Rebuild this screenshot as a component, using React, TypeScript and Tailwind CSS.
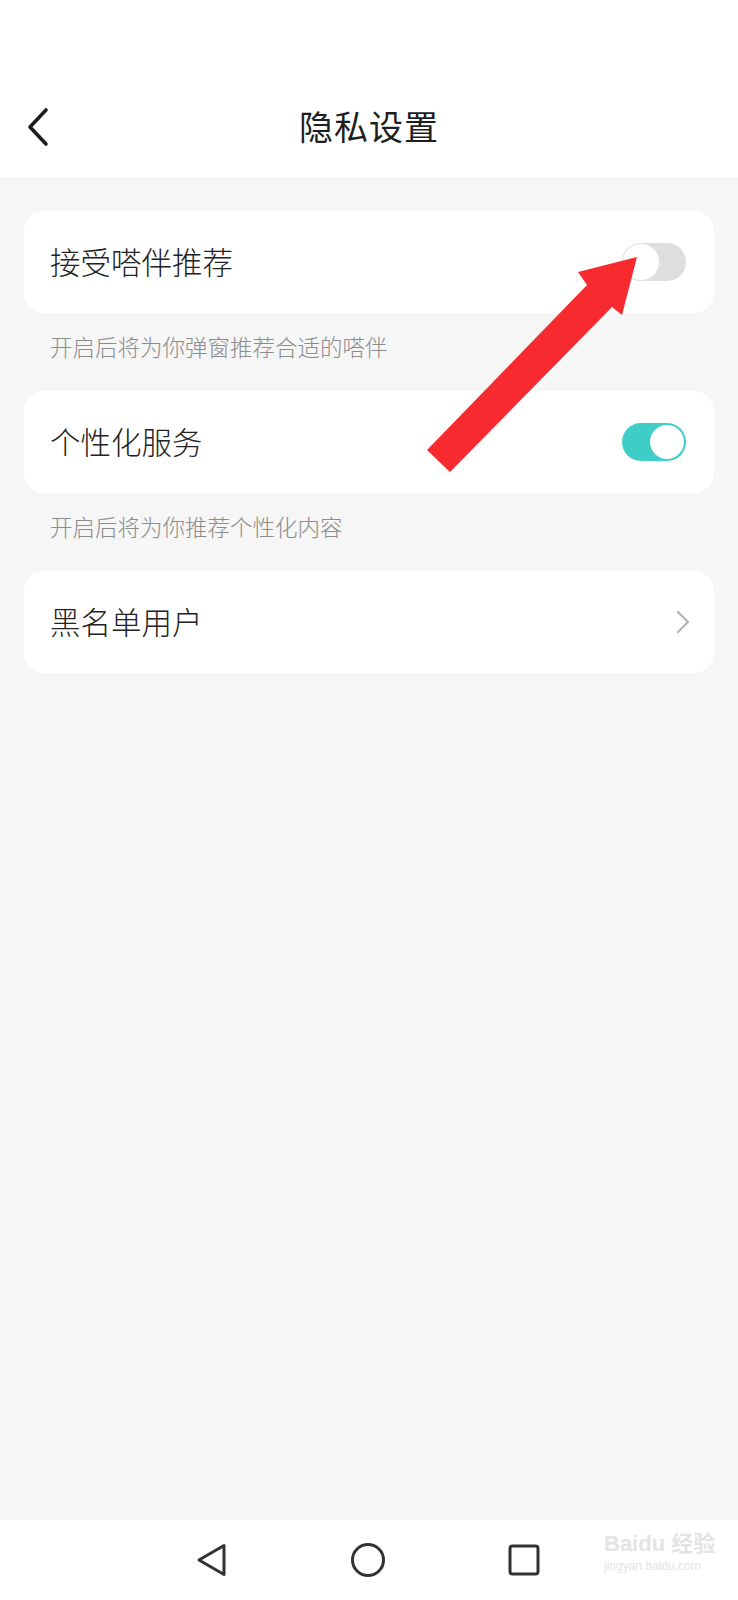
import React from "react";

const font = { fontFamily: '"Noto Sans CJK SC", "Noto Sans", sans-serif' };

function Toggle({ on }: { on: boolean }) {
  return on ? (
    <div className="w-[64px] h-[38px] rounded-full bg-[#3fcec7] flex items-center justify-end pr-[2px]">
      <div className="w-[34px] h-[34px] rounded-full bg-white" />
    </div>
  ) : (
    <div className="w-[64px] h-[38px] rounded-full bg-[#dedede] flex items-center">
      <div className="w-[38px] h-[38px] rounded-full bg-white border border-[#e2e2e2]" />
    </div>
  );
}

function Caption({ children }: { children: React.ReactNode }) {
  return (
    <div className="h-[78px] pt-[16px] px-[26px] text-[22.5px] leading-[34px] text-[#8c8c8c] font-light">
      {children}
    </div>
  );
}

export default function App() {
  return (
    <div className="relative w-[738px] h-[1600px] flex flex-col bg-[#f6f6f6] overflow-hidden" style={font}>
      {/* header */}
      <div className="h-[177px] bg-white flex flex-col justify-end pb-[17px]">
        <div className="relative h-[70px] flex items-center justify-center">
          <svg className="absolute left-[24px] top-[17px]" width="30" height="40" viewBox="0 0 30 40">
            <polyline points="22,3 6,20 22,37" fill="none" stroke="#1c1c1c" strokeWidth="3.6" strokeLinecap="round" strokeLinejoin="round" />
          </svg>
          <span className="text-[34px] text-[#1e1e1e] tracking-[1px]">隐私设置</span>
        </div>
      </div>

      {/* content */}
      <div className="flex-1 px-[24px] pt-[34px] flex flex-col">
        <div className="h-[102px] bg-white rounded-[20px] flex items-center justify-between pl-[26px] pr-[28px]">
          <span className="text-[30.5px] text-[#222] font-light">接受嗒伴推荐</span>
          <Toggle on={false} />
        </div>
        <Caption>开启后将为你弹窗推荐合适的嗒伴</Caption>
        <div className="h-[102px] bg-white rounded-[20px] flex items-center justify-between pl-[26px] pr-[28px]">
          <span className="text-[30.5px] text-[#222] font-light">个性化服务</span>
          <Toggle on={true} />
        </div>
        <Caption>开启后将为你推荐个性化内容</Caption>
        <div className="h-[102px] bg-white rounded-[20px] flex items-center justify-between pl-[26px] pr-[24px]">
          <span className="text-[30.5px] text-[#222] font-light">黑名单用户</span>
          <svg width="14" height="24" viewBox="0 0 14 24">
            <polyline points="2,2 12,12 2,22" fill="none" stroke="#b4b4b4" strokeWidth="2.2" strokeLinecap="round" strokeLinejoin="round" />
          </svg>
        </div>
      </div>

      {/* bottom nav */}
      <div className="h-[80px] bg-white flex items-center">
        <div className="w-[738px] flex items-center">
          <div className="w-[196px]" />
          <svg width="32" height="36" viewBox="0 0 32 36">
            <path d="M3 18 L28 3.5 L28 32.5 Z" fill="none" stroke="#333" strokeWidth="3" strokeLinejoin="round" />
          </svg>
          <div className="w-[122px]" />
          <svg width="36" height="36" viewBox="0 0 36 36">
            <circle cx="18" cy="18" r="15.5" fill="none" stroke="#333" strokeWidth="3" />
          </svg>
          <div className="w-[122px]" />
          <svg width="32" height="32" viewBox="0 0 32 32">
            <rect x="2" y="2" width="28" height="28" rx="2.5" fill="none" stroke="#333" strokeWidth="3" />
          </svg>
        </div>
      </div>

      {/* watermark */}
      <div className="absolute left-[604px] top-[1530px] flex flex-col items-start text-[#e4e4e4] whitespace-nowrap" style={{ fontFamily: '"Liberation Sans", "Noto Sans CJK SC", sans-serif' }}>
        <div className="text-[22px] leading-[28px] font-bold">Baidu 经验</div>
        <div className="text-[12px] leading-[16px]">jingyan.baidu.com</div>
      </div>

      {/* red arrow annotation */}
      <svg className="absolute left-0 top-0 pointer-events-none" width="738" height="1600" viewBox="0 0 738 1600">
        <polygon points="427,450 587,285 578,272 637,257 622,315 612,307 450,472" fill="#f72a2f" />
      </svg>
    </div>
  );
}
